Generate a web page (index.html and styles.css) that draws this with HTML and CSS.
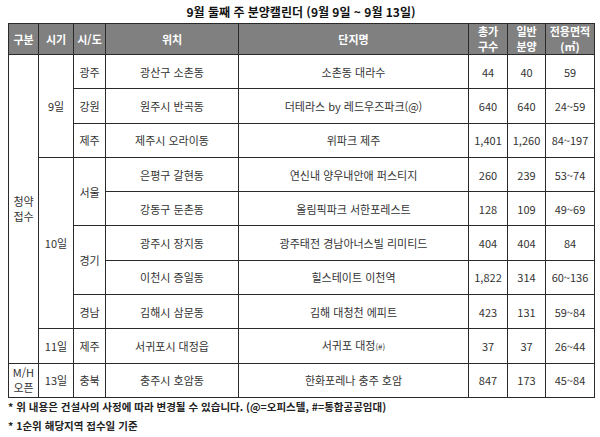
FILE: index.html
```html
<!DOCTYPE html>
<html lang="ko">
<head>
<meta charset="utf-8">
<link rel="stylesheet" href="styles.css">
</head>
<body>
<div class="page">
  <h1 class="title">9월 둘째 주 분양캘린더 (9월 9일 ~ 9월 13일)</h1>
  <table class="cal">
    <colgroup>
      <col class="c1"><col class="c2"><col class="c3"><col class="c4">
      <col class="c5"><col class="c6"><col class="c7"><col class="c8">
    </colgroup>
    <thead>
      <tr>
        <th>구분</th><th>시기</th><th>시/도</th><th>위치</th><th>단지명</th>
        <th><span class="hl">총가</span><span class="hl">구수</span></th>
        <th><span class="hl">일반</span><span class="hl">분양</span></th>
        <th><span class="hl">전용면적</span><span class="hl">(㎡)</span></th>
      </tr>
    </thead>
    <tbody>
      <tr>
        <td rowspan="9"><span class="hl">청약</span><span class="hl">접수</span></td>
        <td rowspan="3">9일</td>
        <td>광주</td><td>광산구 소촌동</td><td>소촌동 대라수</td><td>44</td><td>40</td><td>59</td>
      </tr>
      <tr><td>강원</td><td>원주시 반곡동</td><td>더테라스 by 레드우즈파크(@)</td><td>640</td><td>640</td><td>24~59</td></tr>
      <tr><td>제주</td><td>제주시 오라이동</td><td>위파크 제주</td><td>1,401</td><td>1,260</td><td>84~197</td></tr>
      <tr>
        <td rowspan="5">10일</td>
        <td rowspan="2">서울</td><td>은평구 갈현동</td><td>연신내 양우내안애 퍼스티지</td><td>260</td><td>239</td><td>53~74</td>
      </tr>
      <tr><td>강동구 둔촌동</td><td>올림픽파크 서한포레스트</td><td>128</td><td>109</td><td>49~69</td></tr>
      <tr>
        <td rowspan="2">경기</td><td>광주시 장지동</td><td>광주태전 경남아너스빌 리미티드</td><td>404</td><td>404</td><td>84</td>
      </tr>
      <tr><td>이천시 증일동</td><td>힐스테이트 이천역</td><td>1,822</td><td>314</td><td>60~136</td></tr>
      <tr><td>경남</td><td>김해시 삼문동</td><td>김해 대청천 에피트</td><td>423</td><td>131</td><td>59~84</td></tr>
      <tr><td>11일</td><td>제주</td><td>서귀포시 대정읍</td><td>서귀포 대정<span class="sm">(#)</span></td><td>37</td><td>37</td><td>26~44</td></tr>
      <tr><td><span class="hl">M/H</span><span class="hl">오픈</span></td><td>13일</td><td>충북</td><td>충주시 호암동</td><td>한화포레나 충주 호암</td><td>847</td><td>173</td><td>45~84</td></tr>
    </tbody>
  </table>
  <p class="note">* 위 내용은 건설사의 사정에 따라 변경될 수 있습니다. (@=오피스텔, #=통합공공임대)</p>
  <p class="note second">* 1순위 해당지역 접수일 기준</p>
</div>
</body>
</html>
```

FILE: styles.css
```css
html, body {
  margin: 0;
  padding: 0;
  background: #ffffff;
}
body {
  font-family: "Noto Sans CJK KR", "Noto Sans", sans-serif;
  color: #333333;
}
.page {
  width: 586px;
  margin-left: 8px;
}
.title {
  margin: 0;
  height: 23px;
  padding-top: 5px;
  box-sizing: border-box;
  font-size: 12px;
  line-height: 14px;
  font-weight: bold;
  color: #111111;
  text-align: center;
}
.cal {
  width: 586px;
  table-layout: fixed;
  border-collapse: collapse;
  font-size: 11px;
  line-height: 14px;
}
.c1 { width: 30px; }
.c2 { width: 35px; }
.c3 { width: 32px; }
.c4 { width: 133px; }
.c5 { width: 230px; }
.c6 { width: 39px; }
.c7 { width: 38px; }
.c8 { width: 49px; }
.cal th, .cal td {
  border: 1px solid #2a2a2a;
  text-align: center;
  vertical-align: middle;
  padding: 0;
}
.cal th {
  background: #808080;
  color: #ffffff;
  font-weight: bold;
  height: 28px;
  line-height: 14px;
}
.hl {
  display: block;
  height: 15px;
  line-height: 15px;
}
.cal td {
  height: 33.3px;
}
.sm {
  font-size: 8px;
}
.note {
  margin: 0;
  font-size: 10.5px;
  line-height: 17px;
  font-weight: bold;
  color: #222222;
}
.second {
  margin-top: 2px;
}
```
